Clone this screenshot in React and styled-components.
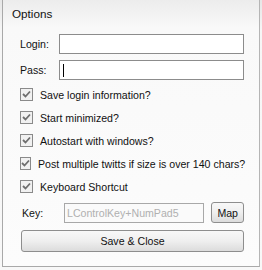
import React from "react";
import styled, { createGlobalStyle } from "styled-components";

const Global = createGlobalStyle`
  html, body { margin: 0; padding: 0; background: #f4f4f4; }
  body { font-family: "Liberation Sans", Arial, sans-serif; }
`;

const Window = styled.div`
  width: 262px;
  height: 270px;
  box-sizing: border-box;
  padding: 0 2px 3px 2px;
  background: linear-gradient(#e6e6e6, #f6f6f6 30px, #f8f8f8);
`;

const Frame = styled.div`
  height: 100%;
  box-sizing: border-box;
  border-left: 1px solid #a9a9a9;
  border-right: 1px solid #b5b5b5;
  border-bottom: 1px solid #a9a9a9;
  background: linear-gradient(180deg, #ececec 0, #f9f9f9 28px, #fcfcfc 100%);
  display: flex;
  flex-direction: column;
`;

const Title = styled.div`
  height: 30px;
  box-sizing: border-box;
  padding: 0 0 4px 9px;
  display: flex;
  align-items: center;
  font-size: 11.7px;
  color: #111;
`;

const Body = styled.div`
  padding: 4px 15px 0 16px;
  display: flex;
  flex-direction: column;
  font-size: 10.6px;
  color: #111;
  white-space: nowrap;
`;

const FieldRow = styled.div`
  display: flex;
  align-items: center;
  height: 20px;
  margin-bottom: 6px;
`;

const Label = styled.label`
  width: 39px;
  padding-left: 1px;
`;

const TextBox = styled.div`
  flex: 1;
  height: 20px;
  box-sizing: border-box;
  border: 1px solid ${(p) => (p.disabled ? "#a8a8a8" : "#8c8c8c")};
  background: ${(p) => (p.disabled ? "#fafafa" : "#fff")};
  color: ${(p) => (p.disabled ? "#b0b0b0" : "#111")};
  display: flex;
  align-items: center;
  padding-left: ${(p) => (p.disabled ? 2 : 3)}px;
`;

const Caret = styled.span`
  width: 1px;
  height: 13px;
  background: #000;
`;

const Checks = styled.div`
  display: flex;
  flex-direction: column;
  margin-top: 2px;
  gap: 10px;
`;

const CheckRow = styled.div`
  display: flex;
  align-items: center;
  height: 13px;
  padding-left: 1px;
`;

const Box = styled.span`
  width: 11px;
  height: 11px;
  border: 1px solid #8a8a8a;
  background: #f1f1f1;
  margin-right: 7px;
  display: flex;
  align-items: center;
  justify-content: center;
`;

const Button = styled.div`
  box-sizing: border-box;
  height: ${(p) => p.h || 21}px;
  margin: ${(p) => p.m || 0};
  border: 1px solid #8e8e8e;
  border-radius: 3px;
  background: linear-gradient(#f8f8f8, #efefef 50%, #dcdcdc);
  display: flex;
  align-items: center;
  justify-content: center;
  padding: 0 5px;
  color: #111;
`;

const KeyRow = styled.div`
  display: flex;
  align-items: center;
  gap: 7px;
  margin-top: 9px;
  height: 21px;
`;

const KeyLabel = styled.span`
  width: 35px;
  padding-left: 3px;
`;

const Check = () => (
  <svg width="9" height="9" viewBox="0 0 9 9">
    <path d="M1 4 L3.5 6.5 L8 1.5" stroke="#6e6e6e" strokeWidth="1.8" fill="none" />
  </svg>
);

const options = [
  "Save login information?",
  "Start minimized?",
  "Autostart with windows?",
  "Post multiple twitts if size is over 140 chars?",
  "Keyboard Shortcut",
];

export default function App() {
  return (
    <Window>
      <Global />
      <Frame>
        <Title>Options</Title>
        <Body>
          <FieldRow>
            <Label>Login:</Label>
            <TextBox />
          </FieldRow>
          <FieldRow>
            <Label>Pass:</Label>
            <TextBox>
              <Caret />
            </TextBox>
          </FieldRow>
          <Checks>
            {options.map((o) => (
              <CheckRow key={o}>
                <Box>
                  <Check />
                </Box>
                {o}
              </CheckRow>
            ))}
          </Checks>
          <KeyRow>
            <KeyLabel>Key:</KeyLabel>
            <TextBox disabled>LControlKey+NumPad5</TextBox>
            <Button>Map</Button>
          </KeyRow>
          <Button h={22} m="7px 0 0 2px">
            Save &amp; Close
          </Button>
        </Body>
      </Frame>
    </Window>
  );
}
